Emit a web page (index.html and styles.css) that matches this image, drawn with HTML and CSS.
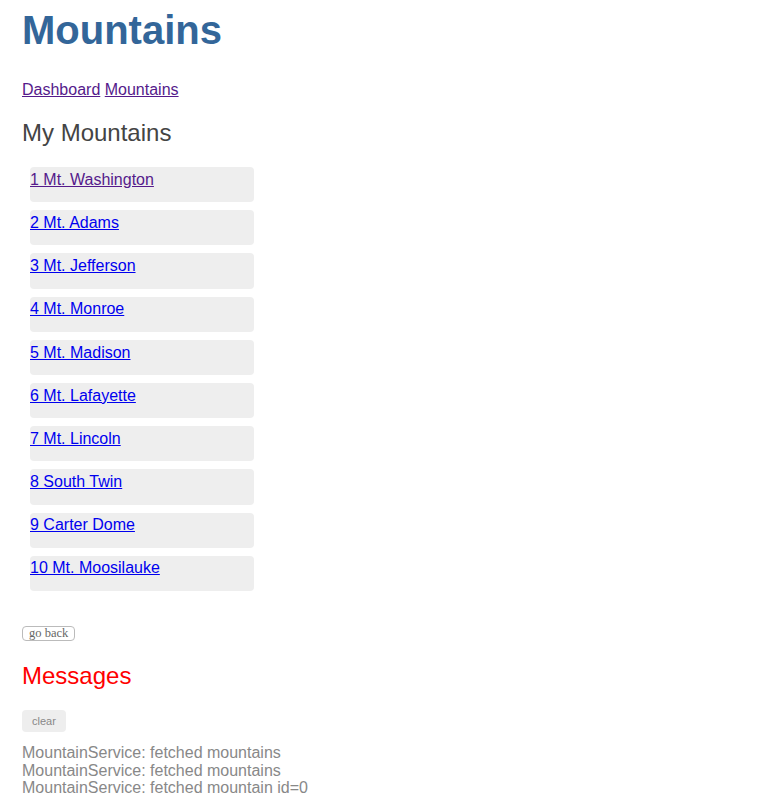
FILE: index.html
```html
<!DOCTYPE html>
<html>
<head>
<meta charset="utf-8">
<title>Mountains</title>
<link rel="stylesheet" href="styles.css">
</head>
<body>
<h1 class="title">Mountains</h1>
<nav class="nav"><a class="link visited" href="#">Dashboard</a> <a class="link visited" href="#">Mountains</a></nav>
<h2 class="subtitle">My Mountains</h2>
<ul class="mountains">
  <li class="item"><a class="link visited" href="#">1 Mt. Washington</a></li>
  <li class="item"><a class="link" href="#">2 Mt. Adams</a></li>
  <li class="item"><a class="link" href="#">3 Mt. Jefferson</a></li>
  <li class="item"><a class="link" href="#">4 Mt. Monroe</a></li>
  <li class="item"><a class="link" href="#">5 Mt. Madison</a></li>
  <li class="item"><a class="link" href="#">6 Mt. Lafayette</a></li>
  <li class="item"><a class="link" href="#">7 Mt. Lincoln</a></li>
  <li class="item"><a class="link" href="#">8 South Twin</a></li>
  <li class="item"><a class="link" href="#">9 Carter Dome</a></li>
  <li class="item"><a class="link" href="#">10 Mt. Moosilauke</a></li>
</ul>
<div class="back-row"><button class="back">go back</button></div>
<h2 class="messages-title">Messages</h2>
<button class="clear">clear</button>
<div class="messages">
  <div class="msg">MountainService: fetched mountains</div>
  <div class="msg">MountainService: fetched mountains</div>
  <div class="msg">MountainService: fetched mountain id=0</div>
</div>
</body>
</html>
```

FILE: styles.css
```css
body {
  margin: 0;
  padding: 0 22px;
  font-family: "Liberation Sans", Arial, sans-serif;
  font-size: 16px;
  color: #888;
}

.title {
  margin: 8px 0 28px;
  font-size: 40px;
  font-weight: bold;
  color: #369;
}

.nav {
  line-height: 18px;
}

.link {
  color: #0000ee;
}

.visited {
  color: #551a8b;
}

.subtitle,
.messages-title {
  margin: 20px 0;
  font-size: 24px;
  font-weight: normal;
  color: #444;
}

.messages-title {
  color: red;
}

.mountains {
  list-style: none;
  padding: 0;
  margin: 0 0 32px;
  width: 240px;
}

.item {
  margin: 8px;
  padding: 4.8px 0;
  height: 25.6px;
  background: #eee;
  border-radius: 4px;
  line-height: 16px;
}

.back-row {
  height: 16px;
  padding-top: 3px;
}

.back {
  display: block;
  margin: 0;
  padding: 0 6px;
  height: 15px;
  font-family: "Liberation Serif", Georgia, serif;
  font-size: 12.5px;
  line-height: 13px;
  color: #666;
  background: #fff;
  border: 1px solid #bbb;
  border-radius: 4px;
}

.clear {
  display: block;
  margin: 0;
  padding: 5px 10px;
  height: 22px;
  font-family: "Liberation Sans", Arial, sans-serif;
  font-size: 11px;
  line-height: 12px;
  color: #888;
  background: #eee;
  border: none;
  border-radius: 4px;
}

.messages {
  margin-top: 12px;
  line-height: 17.7px;
}
```
